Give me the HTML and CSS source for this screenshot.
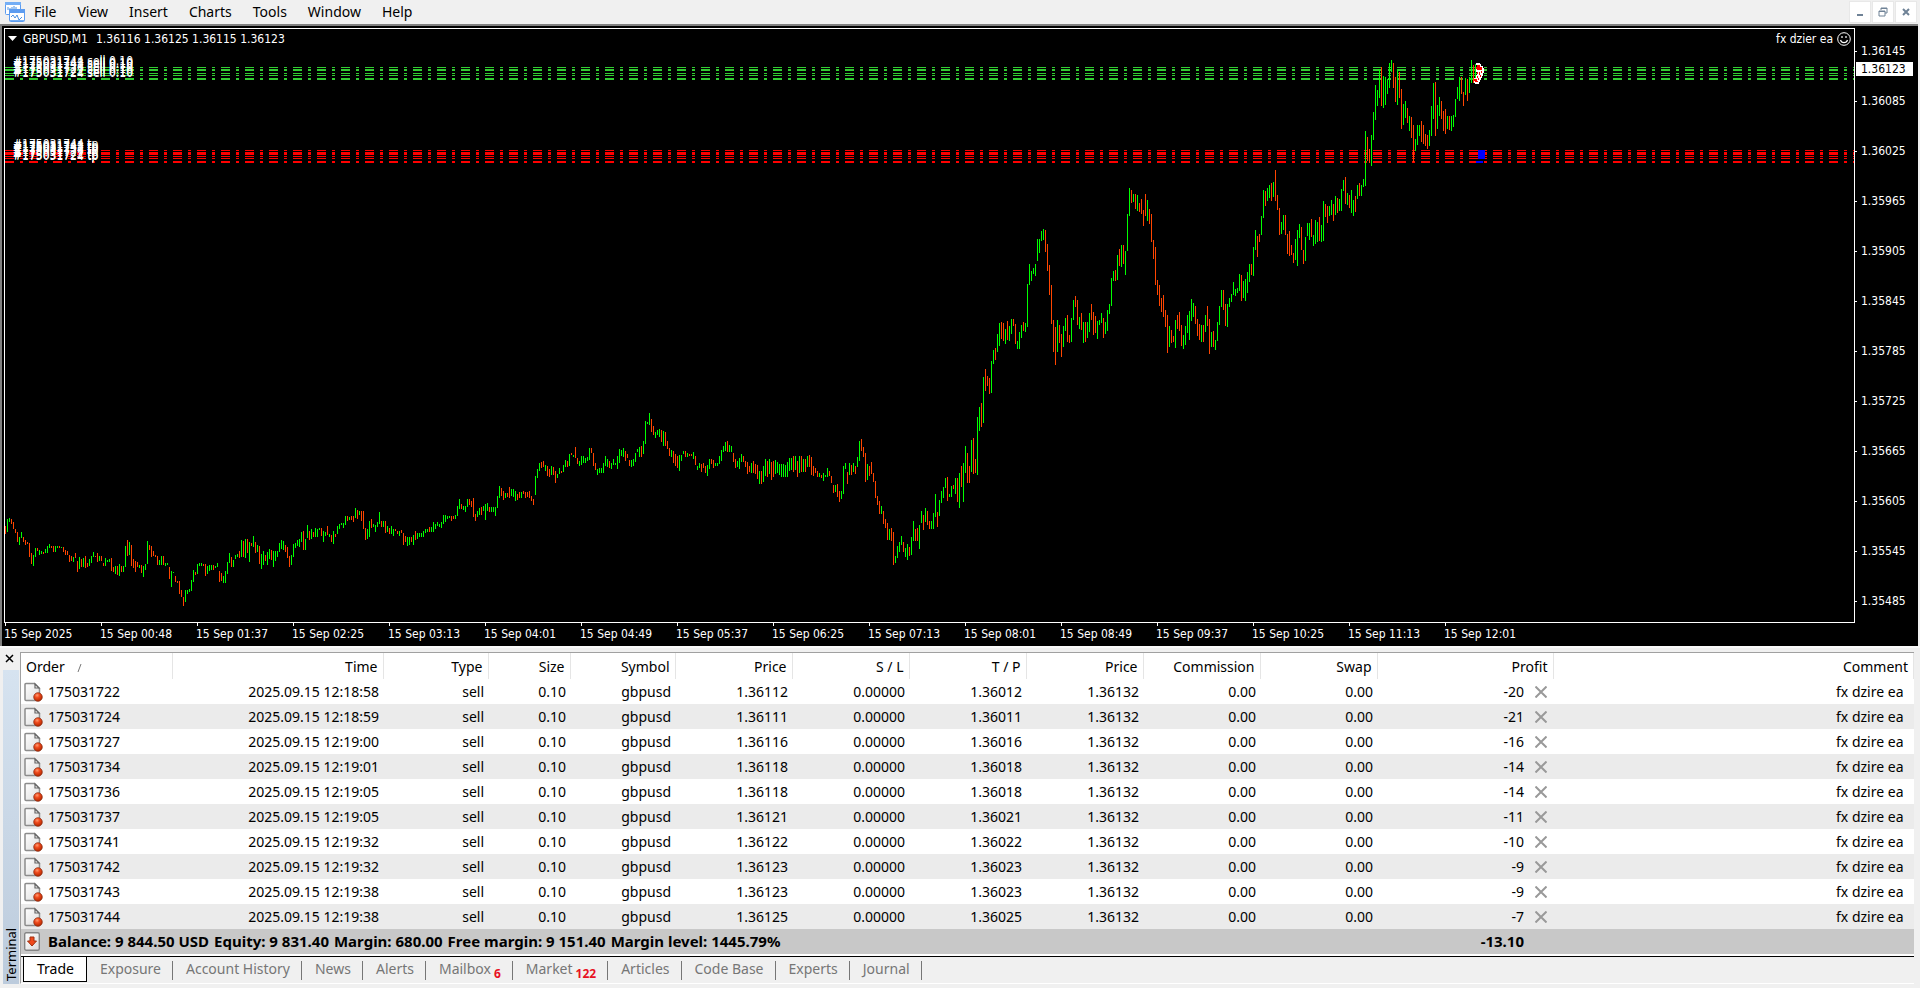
FILE: index.html
```html
<!DOCTYPE html>
<html lang="en">
<head>
  <meta charset="UTF-8">
  <meta name="viewport" content="width=device-width, initial-scale=1.0">
  <link rel="stylesheet" href="styles.css">
  <title>GBPUSD,M1</title>
</head>
<body>
  <!-- Icons used more than once -->
  <svg class="sprite" aria-hidden="true">
    <defs>
      <linearGradient id="paper" x1="0" y1="0" x2="1" y2="1">
        <stop offset="0" stop-color="#ffffff"/>
        <stop offset="1" stop-color="#dcdcdc"/>
      </linearGradient>
      <radialGradient id="ball" cx="0.4" cy="0.3" r="0.7">
        <stop offset="0" stop-color="#ff9a70"/>
        <stop offset="0.4" stop-color="#f04a1c"/>
        <stop offset="1" stop-color="#b02800"/>
      </radialGradient>
    </defs>
    <symbol id="icon-order" viewBox="0 0 19 20">
      <path d="M2 1.5h8.500l5 5v11a1 1 0 0 1-1 1h-12.500a1 1 0 0 1-1-1v-15a1 1 0 0 1 1-1z" fill="url(#paper)" stroke="#8c8c8c" stroke-width="1.500"/>
      <path d="M11 2v4h4z" fill="#fff" stroke="#666" stroke-width="1.200"/>
      <circle cx="14" cy="15" r="4.300" fill="url(#ball)" stroke="#8a2a10" stroke-width="0.700"/>
    </symbol>
    <symbol id="icon-close" viewBox="0 0 12 12">
      <path d="M0.500 0.500l11 11M11.500 0.500l-11 11" stroke="#999" stroke-width="2" fill="none"/>
    </symbol>
  </svg>

  <!-- Menu -->
  <header class="menubar">
    <svg class="logo" width="20" height="20" viewBox="0 0 20 20" aria-hidden="true">
      <rect x="0.500" y="0.500" width="15" height="12" rx="1" fill="#fff" stroke="#5c9cf0"/>
      <rect x="0" y="0" width="16" height="3" fill="#74aef5"/>
      <path d="M3 8V5M5 10V6M7 9V5M9 7V4M11 8V5" stroke="#4a90e2" fill="none"/>
      <rect x="4.500" y="7.500" width="15" height="12" rx="1" fill="#fff" stroke="#5c9cf0"/>
      <rect x="4" y="7" width="16" height="4" fill="#5c9cf0"/>
      <path d="M6 15l2-2 2 3 2-3 2 5 3-3" stroke="#4a90e2" fill="none"/>
      <path d="M5 18.500h14" stroke="#74aef5"/>
    </svg>
    <nav class="menu">
      <button>File</button>
      <button>View</button>
      <button>Insert</button>
      <button>Charts</button>
      <button>Tools</button>
      <button>Window</button>
      <button>Help</button>
    </nav>
    <div class="window-buttons">
      <button aria-label="Minimize"><svg width="10" height="10"><path d="M2 8h6" stroke="#6f8296" stroke-width="2"/></svg></button>
      <button aria-label="Restore"><svg width="10" height="10"><path d="M3 3V1h6v5H7M3 1.500h6M1 4h6v5H1zM1 4.500h6" stroke="#6f8296" fill="none"/></svg></button>
      <button aria-label="Close"><svg width="10" height="10"><path d="M2 2l6 6M8 2l-6 6" stroke="#6f8296" stroke-width="2"/></svg></button>
    </div>
  </header>

  <!-- Chart -->
  <main class="chart">
    <div class="plot">
      <svg id="bars" class="plot-canvas" aria-label="GBPUSD one minute bars"></svg>
      <div class="plot-title">
        <svg width="9" height="5" aria-hidden="true"><path d="M0 0h9l-4.500 5z" fill="#fff"/></svg>
        <span class="plot-symbol">GBPUSD,M1</span>
        <span>1.36116 1.36125 1.36115 1.36123</span>
        <span class="expert">fx dzier ea
          <svg width="14" height="14" viewBox="0 0 14 14" fill="none" stroke="#fff" aria-hidden="true">
            <circle cx="7" cy="7" r="6.300"/>
            <path d="M3.500 8c1 3.500 6 3.500 7 0M5 4v2M9 4v2" stroke-width="1.200"/>
          </svg>
        </span>
      </div>
    </div>
    <div class="price-axis" id="price-axis">
      <span class="price-now">1.36123</span>
    </div>
    <div class="time-axis" id="time-axis"></div>
  </main>

  <!-- Terminal -->
  <section class="terminal">
    <aside class="terminal-side">
      <button class="terminal-close" aria-label="Close terminal"><svg width="9" height="9"><path d="M1 1l7 7M8 1l-7 7" stroke="#000" stroke-width="1.500"/></svg></button>
      <div class="terminal-name">Terminal</div>
    </aside>
    <div class="terminal-main">
      <table class="orders">
        <colgroup>
          <col class="w-order"><col class="w-time"><col class="w-type"><col class="w-size"><col class="w-symbol">
          <col class="w-num"><col class="w-num"><col class="w-num"><col class="w-num"><col class="w-num"><col class="w-num">
          <col class="w-profit"><col>
        </colgroup>
        <thead>
          <tr>
            <th>Order<svg class="sort" width="6" height="8" aria-hidden="true"><path d="M1 8L4 0" stroke="#777"/></svg></th>
            <th>Time</th>
            <th>Type</th>
            <th>Size</th>
            <th>Symbol</th>
            <th>Price</th>
            <th>S / L</th>
            <th>T / P</th>
            <th>Price</th>
            <th>Commission</th>
            <th>Swap</th>
            <th>Profit</th>
            <th>Comment</th>
          </tr>
        </thead>
        <tbody id="orders"></tbody>
        <tfoot>
          <tr>
            <td colspan="11">
              <div class="summary">
                <svg width="16" height="19" viewBox="0 0 16 19" aria-hidden="true">
                  <rect x="0.700" y="0.700" width="14.600" height="17.600" rx="1.500" fill="url(#paper)" stroke="#858585" stroke-width="1.400"/>
                  <path d="M6 5h4v4h2.500L8 14 3.500 9H6z" fill="#f04a1c" stroke="#a03010"/>
                </svg>
                <span>Balance: 9 844.50 USD</span>
                <span>Equity: 9 831.40</span>
                <span>Margin: 680.00</span>
                <span>Free margin: 9 151.40</span>
                <span>Margin level: 1445.79%</span>
              </div>
            </td>
            <td class="total">-13.10</td>
            <td></td>
          </tr>
        </tfoot>
      </table>
      <div class="tabs">
        <button class="tab active">Trade</button>
        <button class="tab">Exposure</button>
        <button class="tab">Account History</button>
        <button class="tab">News</button>
        <button class="tab">Alerts</button>
        <button class="tab">Mailbox<span class="count">6</span></button>
        <button class="tab">Market<span class="count">122</span></button>
        <button class="tab">Articles</button>
        <button class="tab">Code Base</button>
        <button class="tab">Experts</button>
        <button class="tab">Journal</button>
      </div>
    </div>
  </section>

  <script src="script.js"></script>
</body>
</html>
```
FILE: styles.css
```css
/* General Styles */
* {
  box-sizing: border-box;
}

body {
  margin: 0;
  min-height: 100vh;
  display: flex;
  flex-direction: column;
  overflow: hidden;
  font-family: "Noto Sans", "Open Sans", sans-serif;
  font-size: 14px;
  color: #000;
  background: #f0f0f0;
}

button {
  padding: 0;
  border: 0;
  background: none;
  font: inherit;
  color: inherit;
}

.sprite {
  position: absolute;
  width: 0;
  height: 0;
}

/* Menu */
.menubar {
  display: flex;
  align-items: center;
  height: 24px;
  padding: 0 3px 0 5px;
}

.menu {
  display: flex;
}

.menu button {
  padding: 0 12px 0 9px;
  line-height: 24px;
}

.window-buttons {
  display: flex;
  gap: 1px;
  margin-left: auto;
}

.window-buttons button {
  display: flex;
  align-items: center;
  justify-content: center;
  width: 22px;
  height: 22px;
  background: #fff;
  border: 1px solid #e8e8e8;
}

/* Chart */
.chart {
  flex: 1;
  display: grid;
  grid-template-columns: 1fr 63px;
  grid-template-rows: 1fr 23px;
  padding: 2px 0 0 2px;
  margin-right: 2px;
  background: #000;
  border: solid #808080;
  border-width: 2px 0 0 2px;
  color: #fff;
  font-family: "DejaVu Sans Condensed", "DejaVu Sans", sans-serif;
  font-size: 12px;
}

.plot {
  position: relative;
  border: 1px solid #fff;
}

.plot-canvas {
  position: absolute;
  width: 100%;
  height: 100%;
}

.plot-canvas text {
  fill: #fff;
  font-size: 12px;
}

.plot-title {
  position: relative;
  display: flex;
  align-items: center;
  height: 19px;
  padding: 0 3px;
}

.plot-symbol {
  margin: 0 8px 0 6px;
}

.expert {
  display: flex;
  align-items: center;
  gap: 4px;
  margin-left: auto;
}

.price-axis {
  position: relative;
  height: 0;
}

.price-axis div {
  display: flex;
  align-items: center;
  gap: 4px;
  height: 50px;
  padding-bottom: 4px;
}

.price-axis div::before {
  content: "";
  width: 2px;
  height: 1px;
  background: #fff;
}

.price-now {
  position: absolute;
  top: 34px;
  left: 1px;
  width: 57px;
  padding-left: 5px;
  line-height: 14px;
  background: #fff;
  color: #000;
}

.time-axis {
  display: flex;
  overflow: hidden;
}

.time-axis div {
  flex: none;
  width: 96px;
  line-height: 22px;
  white-space: nowrap;
  background: linear-gradient(#fff, #fff) 1px 0 / 1px 3px no-repeat;
}

/* Terminal */
.terminal {
  display: flex;
  padding: 4px 6px 4px 3px;
  border-top: 2px solid #fafafa;
}

.terminal-side {
  display: flex;
  flex-direction: column;
  width: 17px;
}

.terminal-close {
  display: flex;
  height: 18px;
  padding: 2px;
}

.terminal-name {
  flex: 1;
  width: 16px;
  line-height: 16px;
  padding-top: 3px;
  writing-mode: vertical-rl;
  transform: rotate(180deg);
  font-size: 13px;
  background: linear-gradient(#bccbdc, #d6e3f0);
}

.terminal-main {
  flex: 1;
  border: solid #a0a0a0;
  border-width: 1px 0 0 1px;
  border-bottom: 1px solid #fff;
  background: #fff;
}

.orders {
  width: 100%;
  table-layout: fixed;
  border-collapse: collapse;
}

.w-order { width: 151px; }
.w-time { width: 211px; }
.w-type { width: 105px; }
.w-size { width: 82px; }
.w-symbol { width: 105px; }
.w-num { width: 117px; }
.w-profit { width: 176px; }

.orders th {
  height: 26px;
  padding: 0 5px;
  border-right: 1px solid #e5e5e5;
  font-weight: normal;
  text-align: right;
}

.orders th:first-child {
  text-align: left;
}

.sort {
  margin-left: 12px;
}

.orders td {
  height: 25px;
  padding: 0 4px;
  text-align: right;
  line-height: 25px;
}

.orders td:first-child {
  padding-left: 3px;
}

.orders tbody tr:nth-child(even) {
  background: #ebebeb;
}

.orders td:last-child {
  padding-right: 10px;
}

.order-id {
  display: flex;
  align-items: center;
  gap: 5px;
}

.profit {
  display: flex;
  align-items: center;
  justify-content: flex-end;
  gap: 11px;
  padding-right: 2px;
}

.profit button {
  display: flex;
}

.orders tfoot tr {
  background: #c8c8c8;
  font-size: 15px;
  font-weight: bold;
}

.summary {
  display: flex;
  align-items: center;
  gap: 5px;
}

.summary svg {
  margin-right: 3px;
}

.orders td.total {
  padding-right: 29px;
}

/* Tabs */
.tabs {
  display: flex;
  height: 27px;
  margin-top: 2px;
  padding-left: 2px;
  border-top: 1px solid #000;
  background: #f0f0f0;
  color: #767676;
}

.tab {
  position: relative;
  height: 25px;
  padding: 0 12px 2px 13px;
  white-space: nowrap;
}

.tab::after {
  content: "";
  position: absolute;
  right: 0;
  top: 4px;
  width: 1px;
  height: 19px;
  background: #767676;
}

.tab.active {
  padding-bottom: 1px;
  border: solid #000;
  border-width: 0 1px 1px;
  background: #fff;
  color: #000;
}

.tab.active::after {
  content: none;
}

.count {
  margin-left: 3px;
  font-size: 12px;
  font-weight: bold;
  color: #e81123;
  vertical-align: -4px;
  line-height: 0;
}
```
FILE: script.js
```javascript
const SVG_NS = 'http://www.w3.org/2000/svg';

// High and low of each one minute bar in window pixels, u = up, d = down
const bars = `
d526-534 u519-532 u518-522 d519-524 d522-529 d529-533 d532-542 u537-545 u532-538 d537-542 d540-545 d542-544
d543-557 d553-564 u555-566 u548-557 d548-551 u550-555 u551-554 d552-554 u549-553 u546-553 u544-548 d546-548
d546-552 u546-552 u546-548 d546-548 u547-548 d547-552 d550-555 d551-555 d555-562 d556-561 u557-562 d553-558
d561-572 u557-569 d559-567 u558-567 d556-568 d563-567 u559-566 u556-563 u552-557 d556-557 d553-562 u556-561
d556-561 d563-566 u558-566 u560-562 u559-562 d558-571 d567-572 u566-574 d566-575 u564-576 d566-572 u566-572
u546-567 d540-556 u542-555 d545-566 d559-568 d561-572 d562-567 u565-568 d565-573 u566-577 u564-570 u541-564
d545-550 d546-557 d551-556 d555-557 d556-565 u560-565 u556-565 d556-565 u563-566 u563-565 d567-579 u571-587
u572-573 d576-582 d581-583 d581-594 d590-597 d597-606 u590-602 u590-594 u589-592 u580-591 u570-582 d572-575
u564-574 u563-566 u563-566 d564-566 d564-576 u566-574 u565-571 u565-570 d565-570 u566-568 u563-567 d571-582
d573-581 u576-583 u571-583 u562-574 u553-563 d557-567 u560-567 u555-559 u554-557 d551-558 u540-557 d541-557
u539-558 d539-553 u542-562 d543-546 u536-547 d542-553 u545-552 d546-564 u554-569 u551-565 d555-561 u552-565
u549-559 d550-560 u551-567 u551-561 u551-557 u543-552 u540-549 u541-550 d545-552 d547-558 d556-567 u555-565
u544-557 u543-548 u540-546 u539-547 u532-542 d531-550 u539-550 u525-538 d531-540 u529-539 d532-537 u528-537
u529-537 u528-530 d528-536 u531-542 u532-536 d526-535 u534-537 d535-542 u531-544 d534-537 u526-534 u524-529
u523-525 u523-528 u516-525 d516-521 u517-520 d516-520 d516-522 u508-518 d510-519 u511-515 d511-521 d511-529
d528-540 u529-539 u521-537 d519-528 u524-527 u525-532 u522-527 u512-524 d521-527 u521-527 d521-533 u526-532
d528-534 u526-534 u529-536 d529-531 d531-534 u531-536 d530-533 d533-545 d536-542 u537-546 u537-545 d537-542
u535-545 d531-540 u533-539 u533-537 u533-537 u531-537 u529-533 u529-532 d527-532 u527-532 u522-532 u524-529
u522-526 u524-527 u522-528 u515-524 u515-522 u516-519 u516-518 d516-521 d516-519 u515-519 u506-516 u499-509
d504-509 u506-510 u506-512 u499-507 d499-505 d501-507 d498-517 d514-521 u511-517 u508-515 d507-515 u506-511
u504-520 u503-511 d507-512 u507-512 u507-512 u507-516 u496-508 u486-498 d488-496 d491-500 u493-498 d493-497
d487-498 u489-496 u489-497 u491-501 d494-500 d492-498 u492-498 d491-494 d492-498 d492-497 d491-498 d496-501
d499-505 u476-495 u469-478 u463-471 d462-468 d461-467 u465-471 d466-476 d469-477 u466-475 d467-475 d471-483
u474-478 u468-474 d471-473 u465-472 u460-467 d461-467 u454-466 d453-455 u455-457 d447-458 d458-464 u461-466
u456-465 u456-463 u458-463 u457-461 u448-460 d448-453 d453-466 d463-470 u469-475 u468-473 u468-473 u463-473
u456-466 u459-467 d461-468 u463-469 u459-465 u463-465 u456-469 u449-463 u450-456 u448-457 d451-461 d454-458
d460-466 u460-467 u459-466 u453-462 u449-452 u447-457 d446-457 u441-454 u421-444 u422-424 u413-425 d419-432
d426-435 u432-438 u430-435 u429-437 d430-442 u431-446 d432-446 d441-449 d448-456 u450-457 d451-463 d454-466
d456-468 u455-471 u455-461 u451-454 d451-457 u453-457 d454-456 d454-456 u452-459 d456-465 u466-470 u463-468
d464-472 d463-468 d466-473 u465-476 u459-469 d459-464 d460-468 u463-466 u463-466 u456-464 u450-461 u446-452
u442-451 d441-452 u445-452 u446-452 d453-462 d459-468 u461-467 u458-469 u454-462 d456-462 d461-467 d462-474
d466-472 u463-473 d461-473 d464-474 d465-479 u471-484 d471-484 u466-482 u459-476 d461-477 u459-474 d462-480
d461-477 u460-474 u462-473 u464-475 u464-477 u464-477 u465-477 u462-477 u458-471 u458-470 d456-472 u456-470
d461-477 u456-473 d456-472 u459-472 d459-472 u456-467 d455-467 d457-475 d466-476 d468-473 d471-477 u473-477
d475-478 u473-481 u475-477 u468-477 d471-476 d476-483 d485-493 u485-492 d484-497 d491-502 u491-499 u466-494
u463-469 d472-484 u463-475 d465-475 u463-472 d466-474 u457-467 u441-461 d439-451 d447-457 d453-482 u464-480
d466-476 d462-474 d473-482 d481-498 d496-505 d501-514 u506-514 d511-524 d519-528 d523-540 u529-540 d528-541
d532-565 u556-563 u546-558 u542-552 u536-545 d542-552 u548-557 u544-560 d547-556 u537-555 u521-541 d529-541
d528-541 u525-549 u511-523 d515-530 u508-522 d511-525 d521-529 u521-529 u513-529 u494-517 d512-527 u500-516
u491-503 u487-498 u478-488 d477-501 u494-497 u486-497 d485-489 u478-494 d478-502 u473-508 d466-487 u463-502
u446-473 d453-483 d466-483 u440-472 d438-474 d459-473 u417-475 u407-431 d403-427 u377-423 d369-391 d376-386
d378-394 u361-393 u350-364 d348-360 u334-352 u323-346 d322-339 d323-341 u329-344 d321-340 u326-341 u319-334
d319-326 d324-344 u341-349 u332-349 u325-338 d322-331 u323-332 u284-327 u264-285 u271-281 u268-274 u264-276
u239-261 u239-253 u231-241 u229-240 d230-252 d244-271 d265-295 d285-324 d320-352 d327-365 u320-352 d325-343
d334-357 u326-347 u318-331 d315-342 d335-343 u318-342 u300-320 d296-307 d300-325 u317-329 d313-330 u322-343
d322-342 u322-338 u313-332 d304-320 d312-335 d316-333 u321-339 u320-325 u313-323 d318-338 u322-334 u310-331
u304-314 u278-306 u271-281 d270-281 u255-280 d249-266 u245-267 d245-264 u251-275 u214-251 u188-216 d190-203
u194-202 d194-209 u195-211 d203-212 d199-214 d210-226 d194-216 u200-221 d209-224 d214-242 d240-259 d247-285
d280-295 d285-306 d298-312 d295-317 d310-327 d315-353 u326-347 d330-343 d336-342 u320-348 d315-329 d312-331
d325-346 u335-349 u326-345 u315-333 u311-340 u299-321 u303-317 d306-324 d319-336 d324-340 u325-342 d325-342
u315-332 d306-326 d319-354 u332-347 d331-347 u340-350 u322-341 u306-325 u290-307 d290-310 d304-326 u304-327
u298-307 u294-302 u282-295 u289-296 u288-293 u274-291 d275-301 u281-298 u279-301 u272-293 u264-282 d264-275
u247-276 u230-250 d236-257 d234-242 u216-235 u190-218 d191-206 u188-201 u185-198 d183-201 u182-197 d170-201
d195-210 d208-235 u222-234 u215-230 d215-235 d234-254 d231-256 d245-255 d253-263 u239-260 u230-266 u224-238
d227-250 d250-264 u237-261 u223-236 u223-240 d219-237 u235-246 u220-244 u222-242 d217-241 u225-242 u201-241
d204-217 d206-223 u206-216 u200-215 d204-221 u196-215 d198-213 u199-211 u189-211 u180-191 d177-204 u193-205
d195-208 u190-213 u200-216 d196-212 u185-199 d183-196 u185-196 u179-187 u131-186 d137-161 d149-163 u135-166
u112-140 u85-120 u90-106 u69-98 d67-106 u76-108 u77-105 u79-94 u63-88 u60-72 d63-88 d77-102
u69-105 d72-98 d89-129 u104-125 u101-118 d108-123 u116-131 d117-138 d125-162 u139-151 u125-145 u125-136
d121-142 d125-144 d134-146 d135-149 u130-146 u106-136 u83-119 d82-136 u105-129 u97-116 d101-119 d111-131
d109-134 u116-129 d116-130 u116-131 u115-127 u99-117 u87-99 u77-101 d77-94 d92-106 u78-95 d79-101
u77-93 u60-83 d65-83 u64-82
`.trim().split(/\s+/);

// ticket, time, open price, take profit, profit
const orders = [
  ['175031722', '2025.09.15 12:18:58', '1.36112', '1.36012', '-20'],
  ['175031724', '2025.09.15 12:18:59', '1.36111', '1.36011', '-21'],
  ['175031727', '2025.09.15 12:19:00', '1.36116', '1.36016', '-16'],
  ['175031734', '2025.09.15 12:19:01', '1.36118', '1.36018', '-14'],
  ['175031736', '2025.09.15 12:19:05', '1.36118', '1.36018', '-14'],
  ['175031737', '2025.09.15 12:19:05', '1.36121', '1.36021', '-11'],
  ['175031741', '2025.09.15 12:19:32', '1.36122', '1.36022', '-10'],
  ['175031742', '2025.09.15 12:19:32', '1.36123', '1.36023', '-9'],
  ['175031743', '2025.09.15 12:19:38', '1.36123', '1.36023', '-9'],
  ['175031744', '2025.09.15 12:19:38', '1.36125', '1.36025', '-7']
];

// Line positions and the ticket written over each of them
const sellLines = [[79, '175031724'], [78, '175031722'], [75, '175031727'], [73, '175031736'], [70, '175031741'], [69, '175031743'], [67, '175031744']];
const tpLines = [[162, '175031724'], [161, '175031722'], [158, '175031727'], [156, '175031736'], [154, '175031737'], [153, '175031741'], [152, '175031743'], [150, '175031744']];

const canvas = document.getElementById('bars');
const plot = document.createElementNS(SVG_NS, 'g');
plot.setAttribute('transform', 'translate(-5 -29)');
canvas.appendChild(plot);

function add(name, attrs, text) {
  const el = document.createElementNS(SVG_NS, name);
  for (const key in attrs) {
    el.setAttribute(key, attrs[key]);
  }
  if (text) {
    el.textContent = text;
  }
  plot.appendChild(el);
}

function drawBars() {
  const paths = { u: '', d: '' };
  bars.forEach((bar, i) => {
    const [high, low] = bar.slice(1).split('-');
    paths[bar[0]] += `M${5 + i * 2} ${high}h1V${low}h-1z`;
  });
  add('path', { d: paths.u, fill: '#00ff00' });
  add('path', { d: paths.d, fill: '#ff4500' });
}

function drawLevels(levels, color) {
  // dash and dot, repeated every 24px
  let d = '';
  levels.forEach(([y]) => {
    for (let x = 5; x < 5 + canvas.clientWidth; x += 24) {
      d += `M${x} ${y}h9v1h-9zM${x + 15} ${y}h3v1h-3z`;
    }
  });
  add('path', { d: d, fill: color });
}

function drawLabels(levels, suffix) {
  levels.forEach(([y, ticket]) => {
    add('text', { x: 13, y: y - 2 }, `#${ticket} ${suffix}`);
  });
}

function drawMarkers() {
  add('path', { d: 'M1478 150h7v9h-7zM1476 161h7v2h-7z', fill: '#0000ff' });
  add('path', { d: 'M1477 63h3v1h1v2h2v2h1v5h-1v3h-1v2h-1v2h-1v2h-1v2h-4v-1h-1v-5h2v-3h1v-3h-1v-4h1v-3h-1v-2h1z', fill: '#fff' });
  add('path', { d: 'M1477 65h3v2h2v3h-5v-1h-1v-2h1zM1474 79h3v2h1v1h-3v-1h-1zM1481 71h1v2h-1zM1479 72h1v3h-1zM1477 72h1v2h-1zM1480 75h1v2h-1zM1477 76h1v2h-1zM1478 78h1v2h-1z', fill: '#f00' });
}

function fillAxes() {
  const priceAxis = document.getElementById('price-axis');
  for (let price = 136145; price >= 135485; price -= 60) {
    const label = document.createElement('div');
    label.textContent = (price / 100000).toFixed(5);
    priceAxis.appendChild(label);
  }
  const timeAxis = document.getElementById('time-axis');
  ['2025', '00:48', '01:37', '02:25', '03:13', '04:01', '04:49', '05:37', '06:25', '07:13', '08:01', '08:49', '09:37', '10:25', '11:13', '12:01'].forEach(time => {
    const label = document.createElement('div');
    label.textContent = '15 Sep ' + time;
    timeAxis.appendChild(label);
  });
}

function fillOrders() {
  document.getElementById('orders').innerHTML = orders.map(([ticket, time, price, tp, profit]) => `
    <tr>
      <td><div class="order-id"><svg width="19" height="20"><use href="#icon-order"/></svg>${ticket}</div></td>
      <td>${time}</td>
      <td>sell</td>
      <td>0.10</td>
      <td>gbpusd</td>
      <td>${price}</td>
      <td>0.00000</td>
      <td>${tp}</td>
      <td>1.36132</td>
      <td>0.00</td>
      <td>0.00</td>
      <td><div class="profit">${profit}<button aria-label="Close order ${ticket}"><svg width="12" height="12"><use href="#icon-close"/></svg></button></div></td>
      <td>fx dzire ea</td>
    </tr>`).join('');
}

drawLevels(sellLines, '#32cd32');
drawLevels(tpLines, '#ff0000');
drawBars();
drawMarkers();
drawLabels(sellLines, 'sell 0.10');
drawLabels(tpLines, 'tp');
fillAxes();
fillOrders();
```
